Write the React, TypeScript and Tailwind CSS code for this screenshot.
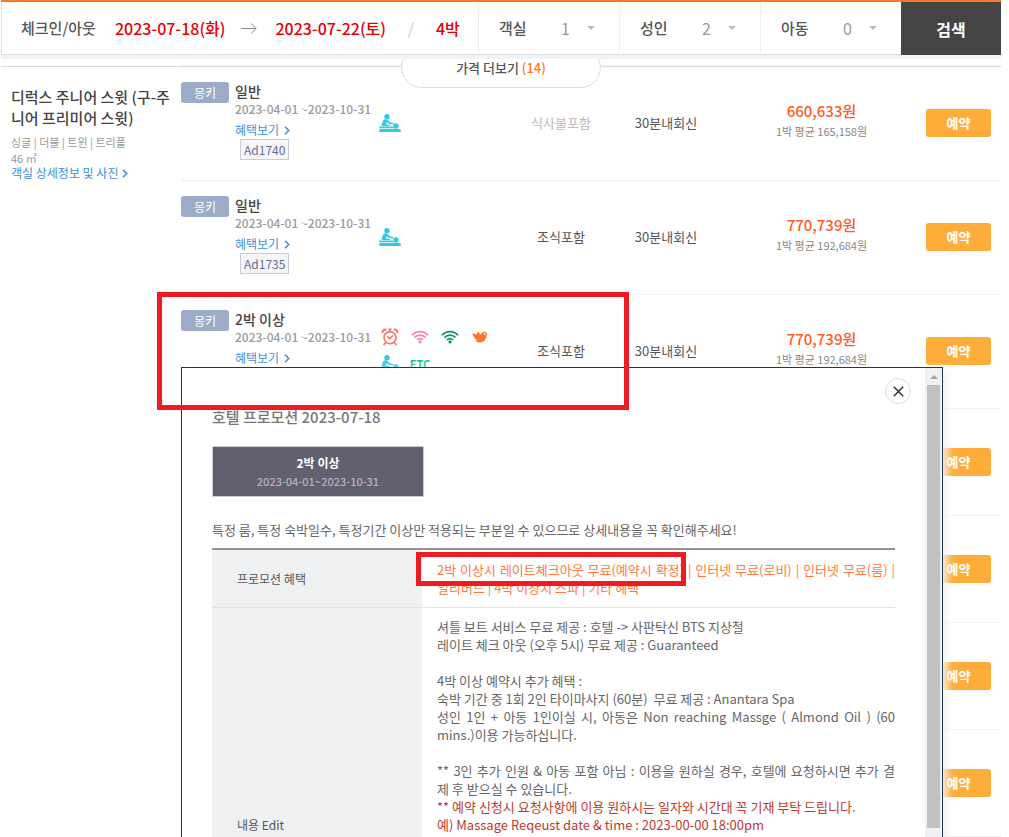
import { useState } from "react";
import clsx from "clsx";

type Benefit = "alarm" | "wifi-pink" | "wifi-green" | "bird" | "massage" | "etc";

type Rate = {
    title: string;
    code?: string;
    benefits: Benefit[];
    meal: string;
    noMeal?: boolean;
    price: string;
    average: string;
};

const rates: Rate[] = [
    {
        title: "일반",
        code: "Ad1740",
        benefits: ["massage"],
        meal: "식사불포함",
        noMeal: true,
        price: "660,633원",
        average: "1박 평균 165,158원",
    },
    {
        title: "일반",
        code: "Ad1735",
        benefits: ["massage"],
        meal: "조식포함",
        price: "770,739원",
        average: "1박 평균 192,684원",
    },
    {
        title: "2박 이상",
        benefits: ["alarm", "wifi-pink", "wifi-green", "bird", "massage", "etc"],
        meal: "조식포함",
        price: "770,739원",
        average: "1박 평균 192,684원",
    },
];

// rows that stay behind the promotion layer
const coveredRows = [4, 5, 6, 7];

const guests = [
    { id: "rooms", label: "객실", value: 1 },
    { id: "adults", label: "성인", value: 2 },
    { id: "children", label: "아동", value: 0 },
];

function Chevron() {
    return (
        <svg width="6" height="9" viewBox="0 0 6 9" fill="none" stroke="currentColor" strokeWidth="1.6">
            <path d="M1 0.8 4.7 4.5 1 8.2" />
        </svg>
    );
}

function Wifi({ color }: { color: string }) {
    return (
        <svg width="18" height="14" viewBox="0 0 18 14" fill="none" stroke={color} strokeWidth="1.7">
            <path d="M1 5.2C5.4 0.3 12.6 0.3 17 5.2" />
            <path d="M3.5 7.6c3.1-3.3 7.9-3.3 11 0" />
            <path d="M6 10c1.7-1.8 4.3-1.8 6 0" />
            <circle cx="9" cy="11.9" r="1.6" fill={color} stroke="none" />
        </svg>
    );
}

function BenefitIcon({ name }: { name: Benefit }) {
    if (name === "alarm")
        return (
            <svg width="18" height="18" viewBox="0 0 18 18" fill="none" stroke="#f8746c" strokeWidth="1.6">
                <circle cx="9" cy="9.6" r="6" />
                <path d="M1.4 5.2C1.2 2.6 3 1 5.4 1.6M16.6 5.2C16.8 2.6 15 1 12.6 1.6" strokeWidth="2" />
                <path d="M6.4 8.4 8.8 10.6 12 7.2M4.6 14.4 2.6 17M13.4 14.4l2 2.6M7.4 1.2h3.2M9 1v2" />
            </svg>
        );
    if (name === "wifi-pink") return <Wifi color="#f985a5" />;
    if (name === "wifi-green") return <Wifi color="#12935a" />;
    if (name === "bird")
        return (
            <svg width="16" height="12" viewBox="0 0 16 12" fill="#fb7a28">
                <path d="M0.3 1.6c1.6 1.3 3 1.9 4.400 2C4.700 2.400 5.400 1.400 6.700 0.700c.4 1.400 1.300 2.400 2.600 2.800C9.400 1.700 10.700 0.700 12.300 0.700c1.300 0 2.300.8 2.500 1.800l.9 1-1 .6c-.2 4.500-2.900 7.400-6.900 7.400-2.200 0-3.800-.7-4.700-1.900.9.1 1.600 0 2.200-.3C2.600 8.400 0.700 5.200 0.300 1.600Z" />
                <circle cx="12.700" cy="3" r="0.900" fill="#fff" />
            </svg>
        );
    if (name === "massage")
        return (
            <svg width="22" height="18" viewBox="0 0 22 18" fill="#35c8e6">
                <circle cx="8" cy="2.700" r="2.700" />
                <path d="M5.300 5.600c1.300-.6 2.300-.3 3.100.5l3 2.500 3.200.5-.3 1.500-3.600-.4-2.900-1.900-.8 2c1.900.3 3.800.9 5.200 1.700H2.700c.2-2.500.9-5.300 2.600-6.400Z" />
                <circle cx="17" cy="12" r="2.700" />
                <path d="M0.300 12.600h13.200l2.200 1.700h-15.400ZM0.300 14.900h16.200c2 0 3.600-.2 5.200.6V18H0.300Z" />
            </svg>
        );
    return <span className="text-[11px] leading-3 font-bold text-[#12c48b]">ETC</span>;
}

function ReserveButton() {
    return (
        <button
            type="button"
            className="h-7 w-[65px] rounded-[3px] bg-[#ffad3a] text-[13px] font-bold text-white"
        >
            예약
        </button>
    );
}

function SearchBar() {
    return (
        <form
            className="relative z-10 border-b-4 border-[#eff3fa]"
            onSubmit={(e) => e.preventDefault()}
        >
            <div className="flex h-[55px] border-t-2 border-t-[#fb7a28]">
                <div className="flex flex-1 items-center border-b border-l border-[#dedede] bg-white pl-[19px] text-base font-medium text-[#e60000]">
                    <span className="w-[94px] text-[15px] text-[#555]">체크인/아웃</span>
                    <span>2023-07-18(화)</span>
                    <svg className="mx-[15px]" width="16" height="12" viewBox="0 0 16 12" fill="none" stroke="#888">
                        <path d="M0 6.500h15M10 1.500l5 5-5 5" />
                    </svg>
                    <span className="pl-1">2023-07-22(토)</span>
                    <span className="w-[50px] text-center font-normal text-[#ccc]">/</span>
                    <span>4박</span>
                </div>
                {guests.map((g) => (
                    <div
                        key={g.id}
                        className="flex w-[141px] items-center border-b border-l border-b-[#dedede] border-l-[#eee] bg-white pl-5"
                    >
                        <label htmlFor={g.id} className="w-[62px] text-[15px] font-medium text-[#555]">
                            {g.label}
                        </label>
                        <select
                            id={g.id}
                            defaultValue={g.value}
                            className="w-10 appearance-none bg-transparent text-base text-[#999]"
                        >
                            {[0, 1, 2, 3, 4].map((n) => (
                                <option key={n} value={n}>
                                    {n}
                                </option>
                            ))}
                        </select>
                        <svg className="pointer-events-none -ml-[14px]" width="8" height="4" viewBox="0 0 8 4" fill="#bbb">
                            <path d="M0 0h8L4 4Z" />
                        </svg>
                    </div>
                ))}
                <button type="submit" className="w-[100px] bg-[#444] text-base font-bold text-white">
                    검색
                </button>
            </div>
        </form>
    );
}

function RateRow({ rate }: { rate: Rate }) {
    return (
        <li className="grid h-[114px] grid-cols-[198px_120px_124px_86px_1fr_75px] items-center border-b border-[#f0f0f0] pb-[2px]">
            <div className="flex gap-[6px] self-start pt-[15px]">
                <span className="h-[21px] w-12 rounded-[3px] bg-[#9aacc8] text-center text-xs leading-[21px] text-white">
                    몽키
                </span>
                <div>
                    <div className="text-sm leading-[18px] font-medium text-[#444]">{rate.title}</div>
                    <div className="text-xs leading-[18px] font-medium text-[#999]">2023-04-01 ~2023-10-31</div>
                    <a href="#promotion" className="flex items-center gap-[5px] text-xs leading-6 text-[#3d92d8]">
                        혜택보기 <Chevron />
                    </a>
                    {rate.code && (
                        <span className="-mt-[3px] ml-[5px] block w-fit border border-[#c8cbd9] bg-[#f6f6f6] px-[3px] text-xs leading-[19px] text-[#666c97]">
                            {rate.code}
                        </span>
                    )}
                </div>
            </div>
            <div className="flex flex-wrap content-center gap-x-2">
                {rate.benefits.map((b) => (
                    <span key={b} className="flex h-[27px] w-[22px] items-center justify-center">
                        <BenefitIcon name={b} />
                    </span>
                ))}
            </div>
            <div className={clsx("text-center text-[13px]", rate.noMeal ? "text-[#bbb]" : "text-[#555]")}>
                {rate.meal}
            </div>
            <div className="text-center text-[13px] text-[#555]">30분내회신</div>
            <div className="pb-[3px] pl-2 text-center">
                <div className="text-[15px] leading-5 font-medium text-[#ff5a1f]">{rate.price}</div>
                <div className="text-[11px] leading-5 text-[#888]">{rate.average}</div>
            </div>
            <ReserveButton />
        </li>
    );
}

function Promotion({ onClose }: { onClose: () => void }) {
    return (
        <section
            id="promotion"
            className="absolute top-[367px] right-[66px] left-[181px] flex h-[500px] border border-[#1e3a52] bg-white shadow-[4px_2px_8px_#f3f3f3]"
        >
            <div className="relative flex-1 overflow-hidden px-[30px] pt-[39px]">
                <button
                    type="button"
                    aria-label="닫기"
                    onClick={onClose}
                    className="absolute top-[10px] right-[14px] flex size-[26px] items-center justify-center rounded-full border border-[#ddd] bg-white"
                >
                    <svg width="11" height="11" viewBox="0 0 11 11" stroke="#333" strokeWidth="1.500">
                        <path d="M0.800 0.800 10.200 10.200M10.200 0.800 0.800 10.200" />
                    </svg>
                </button>
                <h2 className="text-[15px] leading-5 font-medium text-[#777]">호텔 프로모션 2023-07-18</h2>
                <button
                    type="button"
                    className="mt-[19px] block h-[51px] w-[212px] border border-[#ccced6] bg-[#62606f] text-xs leading-[18px]"
                >
                    <span className="block font-bold text-white">2박 이상</span>
                    <span className="block text-[11px] font-medium text-[#b3b2bb]">2023-04-01~2023-10-31</span>
                </button>
                <p className="mt-6 text-[13px] leading-[18px] text-[#666]">
                    특정 룸, 특정 숙박일수, 특정기간 이상만 적용되는 부분일 수 있으므로 상세내용을 꼭 확인해주세요!
                </p>
                <table className="mt-[9px] w-full border-t-2 border-[#929292] text-[13px] leading-[18px]">
                    <tbody>
                        <tr className="border-b border-[#e3e4e6]">
                            <th scope="row" className="w-[210px] bg-[#f0f1f3] pt-[2px] pl-[25px] text-left text-xs font-normal text-[#555]">
                                프로모션 혜택
                            </th>
                            <td className="h-[58px] pt-[1px] pl-[15px] text-justify text-[#ff7a3c]">
                                2박 이상시 레이트체크아웃 무료(예약시 확정) | 인터넷 무료(로비) | 인터넷 무료(룸) | 얼리버드
                                | 4박 이상시 스파 | 기타 혜택
                            </td>
                        </tr>
                        <tr>
                            <th scope="row" className="bg-[#f0f1f3] pt-[2px] pl-[25px] text-left text-xs font-normal text-[#555]">
                                내용 Edit
                            </th>
                            <td className="h-[434px] pt-[10px] pl-[15px] text-justify align-top text-[#666]">
                                <p>셔틀 보트 서비스 무료 제공 : 호텔 -&gt; 사판탁신 BTS 지상철</p>
                                <p>레이트 체크 아웃 (오후 5시) 무료 제공 : Guaranteed</p>
                                <p className="mt-[18px]">4박 이상 예약시 추가 혜택 :</p>
                                <p>숙박 기간 중 1회 2인 타이마사지 (60분)&nbsp; 무료 제공 : Anantara Spa</p>
                                <p>
                                    성인 1인 + 아동 1인이실 시, 아동은 Non reaching Massge ( Almond Oil ) (60 mins.)이용
                                    가능하십니다.
                                </p>
                                <p className="mt-[18px]">
                                    <span className="block [text-align-last:justify]">
                                        ** 3인 추가 인원 &amp; 아동 포함 아님 : 이용을 원하실 경우, 호텔에 요청하시면 추가 결
                                    </span>
                                    제 후 받으실 수 있습니다.
                                </p>
                                <div className="text-[#c0392b]">
                                    <p>** 예약 신청시 요청사항에 이용 원하시는 일자와 시간대 꼭 기재 부탁 드립니다.</p>
                                    <p>예) Massage Reqeust date &amp; time : 2023-00-00 18:00pm</p>
                                </div>
                            </td>
                        </tr>
                    </tbody>
                </table>
            </div>
            <div className="flex w-[17px] flex-col items-center bg-[#f1f1f1]">
                <svg className="mt-[7px] mb-[6px]" width="8" height="4" viewBox="0 0 8 4" fill="#a3a3a3">
                    <path d="M4 0 8 4H0Z" />
                </svg>
                <div className="h-[443px] w-[13px] bg-[#c1c1c1]" />
            </div>
        </section>
    );
}

export default function App() {
    const [open, setOpen] = useState(true);

    return (
        <div className="relative h-screen overflow-hidden bg-white pr-2 pl-px font-['Noto_Sans_CJK_KR',sans-serif]">
            <SearchBar />
            <main>
                <div className="relative -mt-3 flex h-5 justify-center">
                    <div className="absolute inset-x-0 bottom-0 h-px bg-[#dcdcdc]" />
                    <div className="absolute right-0 bottom-px left-[180px] h-px bg-[#f0f0f0]" />
                    <button
                        type="button"
                        className="relative h-[41px] w-[200px] rounded-full border border-[#ddd] bg-white text-[13px] font-medium text-[#555]"
                    >
                        가격 더보기 <span className="text-[#fb7a28]">(14)</span>
                    </button>
                </div>
                <div className="flex">
                    <div className="w-[180px] shrink-0 pt-[19px] pl-[10px]">
                        <h1 className="w-[164px] text-[15px] leading-[21px] font-medium text-[#444]">
                            디럭스 주니어 스윗 (구-주니어 프리미어 스윗)
                        </h1>
                        <div className="mt-[6px] text-[11px] leading-4 text-[#999]">
                            <div>싱글 | 더블 | 트윈 | 트리플</div>
                            <div>46 ㎡</div>
                        </div>
                        <a href="#room" className="flex items-center gap-1 text-xs leading-[14px] text-[#3d92d8]">
                            객실 상세정보 및 사진 <Chevron />
                        </a>
                    </div>
                    <ul className="flex-1">
                        {rates.map((rate, i) => (
                            <RateRow key={i} rate={rate} />
                        ))}
                        {coveredRows.map((n) => (
                            <li key={n} className="flex h-[107px] items-center justify-end border-b border-[#f0f0f0] pr-[10px]">
                                <ReserveButton />
                            </li>
                        ))}
                    </ul>
                </div>
            </main>
            {open && <Promotion onClose={() => setOpen(false)} />}
            {/* red marks over the promotion row and its benefit */}
            <div className="pointer-events-none absolute top-[292px] left-[157px] h-[118px] w-[472px] border-5 border-[#ed1c24]" />
            <div className="pointer-events-none absolute top-[552px] left-[416px] h-[34px] w-[270px] border-5 border-[#ed1c24]" />
        </div>
    );
}
